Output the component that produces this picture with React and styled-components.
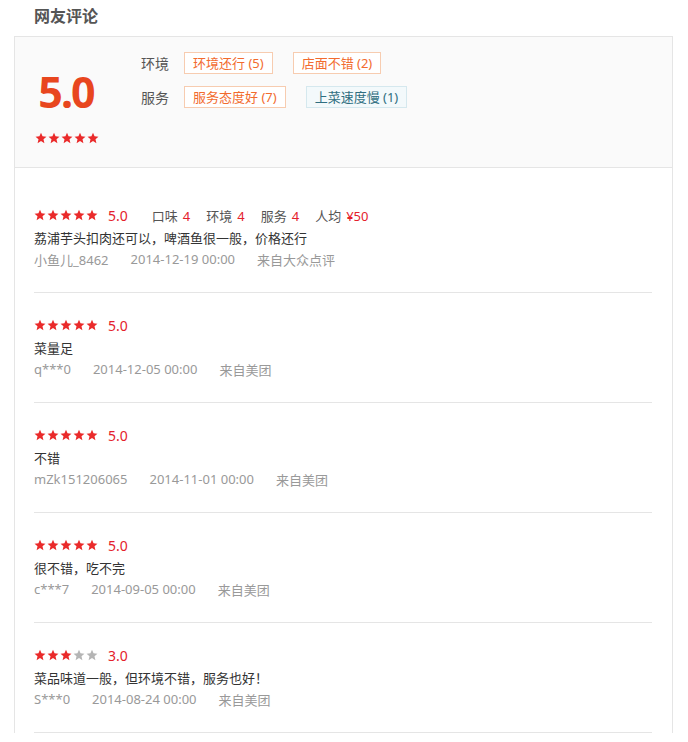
import React from "react";
import styled, { createGlobalStyle } from "styled-components";

const GlobalStyle = createGlobalStyle`
  body {
    margin: 0;
    background: #fff;
    font-family: "Noto Sans", "Noto Sans CJK SC", sans-serif;
    color: #333;
  }
`;

const Page = styled.div`
  width: 688px;
  padding: 0 15px 0 14px;
  box-sizing: border-box;
`;

const Title = styled.h2`
  margin: 0;
  height: 36px;
  line-height: 32px;
  padding-left: 20px;
  font-size: 16px;
  font-weight: bold;
  color: #555;
`;

const Panel = styled.div`
  border: 1px solid #e5e5e5;
  border-bottom: none;
`;

const Summary = styled.div`
  display: flex;
  height: 130px;
  background: #fafafa;
  border-bottom: 1px solid #e5e5e5;
`;

const ScoreCol = styled.div`
  width: 104px;
  padding-top: 30px;
  display: flex;
  flex-direction: column;
  align-items: center;
`;

const BigScore = styled.div`
  font-size: 43px;
  line-height: 50px;
  font-weight: bold;
  color: #e8461e;
  letter-spacing: -2px;
  margin-left: -2px;
`;

const ScoreStars = styled.div`
  margin-top: 10px;
`;

const TagArea = styled.div`
  margin-left: 22px;
  padding-top: 15px;
  display: flex;
  flex-direction: column;
  gap: 12px;
`;

const TagRow = styled.div`
  display: flex;
  align-items: center;
`;

const TagLabel = styled.span`
  width: 43px;
  font-size: 14px;
  color: #555;
`;

const Tag = styled.span`
  height: 20px;
  line-height: 20px;
  padding: 0 8px;
  margin-right: 20px;
  font-size: 13px;
  border: 1px solid ${(p) => (p.$bad ? "#d5e8ee" : "#f7ccb0")};
  background: ${(p) => (p.$bad ? "#f3f9fb" : "#fff")};
  color: ${(p) => (p.$bad ? "#2f6e80" : "#f26b2e")};
`;

const List = styled.div`
  padding: 15px 20px 0 19px;
`;

const Review = styled.div`
  padding: 21px 0 22px;
  border-bottom: 1px solid #e5e5e5;
`;

const Line = styled.div`
  display: flex;
  align-items: center;
  height: 22px;
  font-size: 13px;
`;

const ScoreLine = styled(Line)`
  color: #555;
`;

const Score = styled.span`
  margin: 0 24px 0 10px;
  font-size: 14px;
  color: #e4212b;
`;

const Sub = styled.span`
  margin-right: 16px;
  b {
    font-weight: normal;
    color: #e4212b;
    margin-left: 5px;
  }
`;

const Text = styled(Line)`
  color: #333;
`;

const Meta = styled(Line)`
  color: #999;
  span {
    margin-right: 22px;
  }
`;

const StarWrap = styled.span`
  display: inline-flex;
  gap: 1px;
`;

const Star = ({ on }) => (
  <svg width="12" height="12" viewBox="0 0 24 24">
    <path
      d="M12 1.5l3.1 7.2 7.8.7-5.9 5.2 1.8 7.7L12 18.2l-6.8 4.1 1.8-7.7-5.9-5.2 7.8-.7z"
      fill={on ? "#ea2a2a" : "#b5b5b5"}
    />
  </svg>
);

const Stars = ({ n }) => (
  <StarWrap>
    {[1, 2, 3, 4, 5].map((i) => (
      <Star key={i} on={i <= n} />
    ))}
  </StarWrap>
);

const reviews = [
  {
    score: 5,
    subs: [
      ["口味", "4"],
      ["环境", "4"],
      ["服务", "4"],
      ["人均", "¥50"],
    ],
    text: "荔浦芋头扣肉还可以，啤酒鱼很一般，价格还行",
    user: "小鱼儿_8462",
    date: "2014-12-19 00:00",
    from: "来自大众点评",
  },
  { score: 5, text: "菜量足", user: "q***0", date: "2014-12-05 00:00", from: "来自美团" },
  { score: 5, text: "不错", user: "mZk151206065", date: "2014-11-01 00:00", from: "来自美团" },
  { score: 5, text: "很不错，吃不完", user: "c***7", date: "2014-09-05 00:00", from: "来自美团" },
  {
    score: 3,
    text: "菜品味道一般，但环境不错，服务也好！",
    user: "S***0",
    date: "2014-08-24 00:00",
    from: "来自美团",
  },
];

export default function App() {
  return (
    <>
      <GlobalStyle />
      <Page>
        <Title>网友评论</Title>
        <Panel>
          <Summary>
            <ScoreCol>
              <BigScore>5.0</BigScore>
              <ScoreStars>
                <Stars n={5} />
              </ScoreStars>
            </ScoreCol>
            <TagArea>
              <TagRow>
                <TagLabel>环境</TagLabel>
                <Tag>环境还行 (5)</Tag>
                <Tag>店面不错 (2)</Tag>
              </TagRow>
              <TagRow>
                <TagLabel>服务</TagLabel>
                <Tag>服务态度好 (7)</Tag>
                <Tag $bad>上菜速度慢 (1)</Tag>
              </TagRow>
            </TagArea>
          </Summary>
          <List>
            {reviews.map((r, i) => (
              <Review key={i}>
                <ScoreLine>
                  <Stars n={r.score} />
                  <Score>{r.score.toFixed(1)}</Score>
                  {r.subs &&
                    r.subs.map(([k, v]) => (
                      <Sub key={k}>
                        {k}
                        <b>{v}</b>
                      </Sub>
                    ))}
                </ScoreLine>
                <Text>{r.text}</Text>
                <Meta>
                  <span>{r.user}</span>
                  <span>{r.date}</span>
                  <span>{r.from}</span>
                </Meta>
              </Review>
            ))}
          </List>
        </Panel>
      </Page>
    </>
  );
}
